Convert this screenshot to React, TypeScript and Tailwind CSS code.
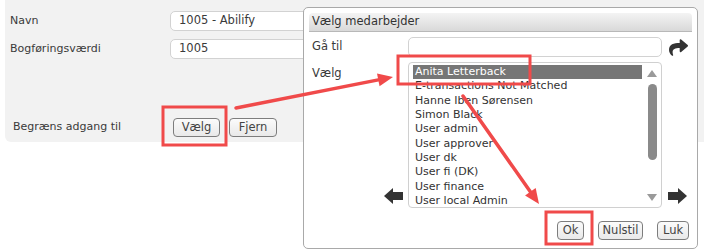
import React from "react";
import { FaShare } from "react-icons/fa";

const RED = "#f04a4a";

function arrowHead(x1: number, y1: number, x2: number, y2: number, len = 15, half = 6.5) {
  const dx = x2 - x1;
  const dy = y2 - y1;
  const d = Math.hypot(dx, dy);
  const ux = dx / d;
  const uy = dy / d;
  const bx = x2 - ux * len;
  const by = y2 - uy * len;
  const px = -uy;
  const py = ux;
  return {
    pts: `${x2},${y2} ${bx + px * half},${by + py * half} ${bx - px * half},${by - py * half}`,
    bx,
    by,
  };
}

function RedArrow({ x1, y1, x2, y2 }: { x1: number; y1: number; x2: number; y2: number }) {
  const h = arrowHead(x1, y1, x2, y2);
  return (
    <g>
      <line x1={x1} y1={y1} x2={h.bx} y2={h.by} stroke={RED} strokeWidth={3.5} strokeLinecap="round" />
      <polygon points={h.pts} fill={RED} />
    </g>
  );
}

function BlockArrow({ dir }: { dir: "left" | "right" }) {
  return (
    <svg width="19" height="16" viewBox="0 0 19 16" className={dir === "left" ? "-scale-x-100" : ""}>
      <polygon points="0,4 10,4 10,0 19,8 10,16 10,12 0,12" fill="#333" />
    </svg>
  );
}

function Btn({ children, w }: { children: React.ReactNode; w: string }) {
  return (
    <div
      className={`${w} h-[19px] flex items-center justify-center rounded-[4px] border border-[#7d7d7d] bg-gradient-to-b from-[#fbfbfb] to-[#e9e9e9] text-[11.5px] text-[#444]`}
    >
      {children}
    </div>
  );
}

const items = [
  "Anita Letterback",
  "E-transactions Not Matched",
  "Hanne Iben Sørensen",
  "Simon Black",
  "User admin",
  "User approver",
  "User dk",
  "User fi (DK)",
  "User finance",
  "User local Admin",
];

export default function App() {
  return (
    <div className="relative w-[704px] h-[252px] overflow-hidden bg-white font-['DejaVu_Sans',sans-serif] text-[11px] text-[#3a3a3a]">
      {/* main panel */}
      <div className="ml-[5px] w-[699px] h-[142px] rounded-bl-[6px] bg-[#f2f2f2] pt-[11px] pl-[5px] flex flex-col">
        <div className="flex items-center h-[20px]">
          <div className="w-[160px]">Navn</div>
          <div className="w-[200px] h-[20px] rounded-[5px] border border-[#d2d2d2] bg-white pl-[8px] flex items-center text-[11.5px]">
            1005 - Abilify
          </div>
        </div>
        <div className="flex items-center h-[20px] mt-[8px]">
          <div className="w-[160px]">Bogføringsværdi</div>
          <div className="w-[200px] h-[20px] rounded-[5px] border border-[#d2d2d2] bg-white pl-[8px] flex items-center text-[11.5px]">
            1005
          </div>
        </div>
        <div className="flex items-center h-[19px] mt-[59px]">
          <div className="w-[163px] pl-[3px]">Begræns adgang til</div>
          <div className="flex gap-[9px]">
            <Btn w="w-[47px]">Vælg</Btn>
            <Btn w="w-[48px]">Fjern</Btn>
          </div>
        </div>
      </div>

      {/* dialog window */}
      <div className="absolute left-[303px] top-[7px] w-[395px] h-[242px] rounded-[5px] border border-[#a9a9a9] bg-white p-[5px] flex flex-col">
        <div className="h-[19px] rounded-t-[4px] border-b border-[#b8b8b8] bg-gradient-to-b from-[#f4f4f4] to-[#d9d9d9] pl-[3px] flex items-center text-[11.5px] text-[#333]">
          Vælg medarbejder
        </div>
        <div className="flex items-center mt-[5px] pl-[3px] h-[20px]">
          <div className="w-[96px] text-[11.5px]">Gå til</div>
          <div className="w-[254px] h-[20px] rounded-[5px] border border-[#d2d2d2] bg-white" />
          <div className="ml-[6px] w-[20px] h-[20px] flex items-center justify-center">
            <FaShare size={19} color="#333" />
          </div>
        </div>
        <div className="flex mt-[5px] pl-[3px]">
          <div className="w-[96px] flex flex-col justify-between">
            <div className="pt-[3px] text-[11.5px]">Vælg</div>
            <div className="flex justify-end pr-[5px] pb-[4px]">
              <BlockArrow dir="left" />
            </div>
          </div>
          <div className="w-[254px] h-[146px] rounded-[4px] border border-[#d0d0d0] bg-white flex pl-[4px] pt-[2px]">
            <div className="w-[229px] flex flex-col">
              {items.map((it, i) => (
                <div
                  key={it}
                  className={`h-[14.33px] leading-[14.33px] pl-[2px] whitespace-nowrap text-[11px] ${
                    i === 0 ? "bg-[#767676] text-white" : "text-[#333]"
                  }`}
                >
                  {it}
                </div>
              ))}
            </div>
            <div className="ml-[4px] w-[12px] flex flex-col items-center pt-[5px] pb-[6px]">
              <svg width="10" height="7" viewBox="0 0 10 7">
                <polygon points="0,7 5,0 10,7" fill="#9a9a9a" />
              </svg>
              <div className="mt-[7px] w-[9px] h-[76px] rounded-full bg-[#8a8a8a]" />
              <div className="flex-1" />
              <svg width="10" height="7" viewBox="0 0 10 7">
                <polygon points="0,0 10,0 5,7" fill="#9a9a9a" />
              </svg>
            </div>
          </div>
          <div className="ml-[6px] flex flex-col justify-end pb-[4px]">
            <BlockArrow dir="right" />
          </div>
        </div>
        <div className="flex justify-end items-center gap-[14px] mt-[13px] pr-[3px]">
          <Btn w="w-[27px]">Ok</Btn>
          <Btn w="w-[45px]">Nulstil</Btn>
          <Btn w="w-[32px]">Luk</Btn>
        </div>
      </div>

      {/* annotation overlay */}
      <svg className="absolute inset-0 pointer-events-none" width="704" height="252">
        <rect x="163" y="107" width="63" height="38" fill="none" stroke={RED} strokeWidth="3" />
        <rect x="398" y="56" width="132" height="28" fill="none" stroke={RED} strokeWidth="3" />
        <rect x="546" y="212" width="46" height="32" fill="none" stroke={RED} strokeWidth="3" />
        <RedArrow x1={236} y1={108} x2={393} y2={77} />
        <RedArrow x1={463} y1={96} x2={539} y2={204} />
      </svg>
    </div>
  );
}
